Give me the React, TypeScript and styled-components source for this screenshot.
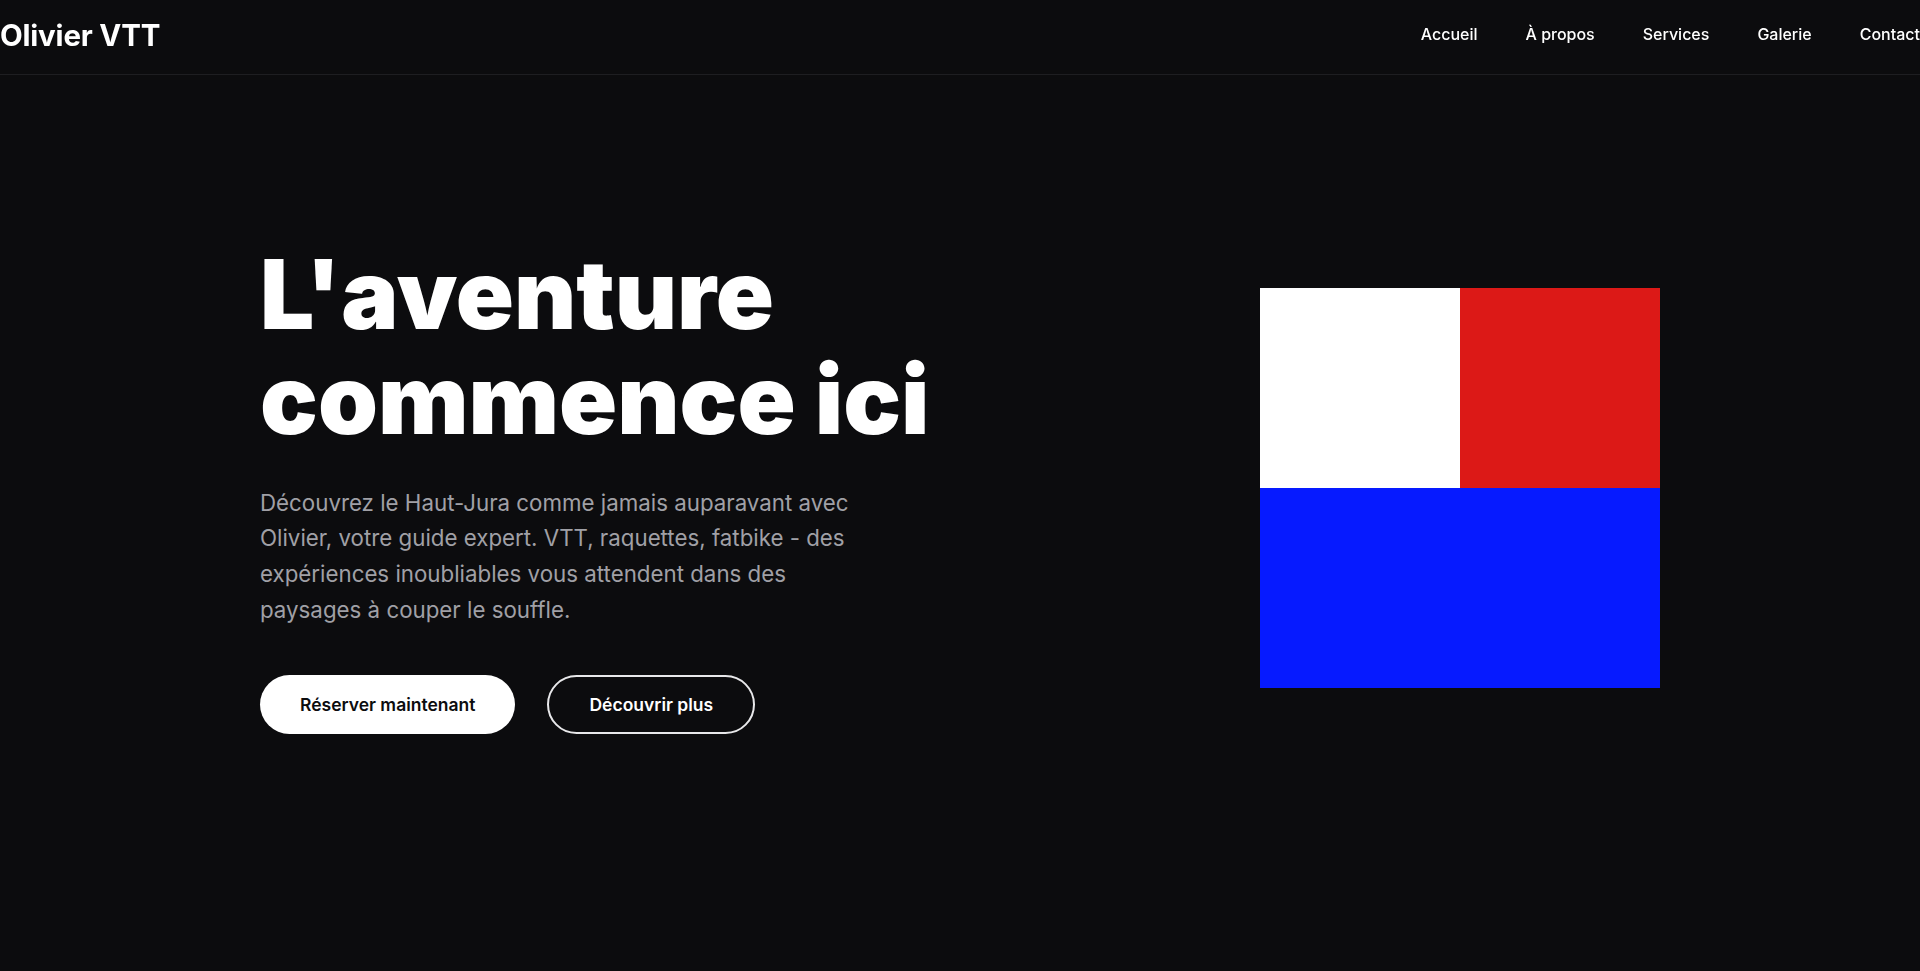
import React from "react";
import styled, { createGlobalStyle } from "styled-components";

const Global = createGlobalStyle`
  html, body {
    margin: 0;
    padding: 0;
    background: #0c0c0e;
    overflow: hidden;
  }
  body {
    font-family: Inter, "Noto Sans", sans-serif;
    color: #ffffff;
  }
  * { box-sizing: border-box; }
`;

const Header = styled.header`
  position: fixed;
  top: 0;
  left: 0;
  right: 0;
  height: 75px;
  display: flex;
  align-items: center;
  justify-content: space-between;
  border-bottom: 1px solid #1e1e21;
  background: #0c0c0e;
  z-index: 10;
`;

const Logo = styled.a`
  font-size: 29.5px;
  font-weight: 700;
  letter-spacing: -0.2px;
  color: #ffffff;
  text-decoration: none;
  margin-top: -5px;
`;

const Nav = styled.nav`
  display: flex;
  gap: 48px;
  margin-right: 0;
  margin-top: -6px;
`;

const NavLink = styled.a`
  font-size: 16px;
  font-weight: 500;
  color: #ffffff;
  text-decoration: none;
`;

const Hero = styled.section`
  min-height: 100vh;
  padding: 5px 260px 0 260px;
  display: grid;
  grid-template-columns: 1fr 1fr;
  align-items: center;
`;

const Content = styled.div`
  display: flex;
  flex-direction: column;
  align-items: flex-start;
`;

const Title = styled.h1`
  margin: 0 0 32px;
  font-size: 96px;
  line-height: 1.1;
  font-weight: 900;
  letter-spacing: 0;
  color: #ffffff;
  white-space: nowrap;
`;

const Lead = styled.p`
  margin: 0 0 48px;
  max-width: 610px;
  font-size: 22.3px;
  line-height: 1.6;
  color: #a0a0a6;
`;

const Actions = styled.div`
  display: flex;
  gap: 32px;
`;

const Button = styled.a<{ $variant: "solid" | "outline" }>`
  display: inline-flex;
  align-items: center;
  justify-content: center;
  height: 59px;
  padding: 0 40px;
  border-radius: 999px;
  font-size: 17.5px;
  font-weight: 600;
  text-decoration: none;
  background: ${(p) => (p.$variant === "solid" ? "#ffffff" : "transparent")};
  color: ${(p) => (p.$variant === "solid" ? "#0c0c0e" : "#ffffff")};
  border: ${(p) => (p.$variant === "solid" ? "none" : "2px solid #e8e8ea")};
`;

const Visual = styled.div`
  justify-self: end;
  display: flex;
  justify-content: flex-end;
`;

const Flag = styled.div`
  width: 400px;
  height: 400px;
  display: grid;
  grid-template-columns: 1fr 1fr;
  grid-template-rows: 1fr 1fr;
`;

const Block = styled.div<{ $color: string; $span?: boolean }>`
  background: ${(p) => p.$color};
  grid-column: ${(p) => (p.$span ? "1 / span 2" : "auto")};
`;

export default function App() {
  return (
    <>
      <Global />
      <Header>
        <Logo href="#">Olivier VTT</Logo>
        <Nav>
          <NavLink href="#">Accueil</NavLink>
          <NavLink href="#">À propos</NavLink>
          <NavLink href="#">Services</NavLink>
          <NavLink href="#">Galerie</NavLink>
          <NavLink href="#">Contact</NavLink>
        </Nav>
      </Header>
      <Hero>
        <Content>
          <Title>
            L'aventure
            <br />
            commence ici
          </Title>
          <Lead>
            Découvrez le Haut-Jura comme jamais auparavant avec Olivier, votre guide expert. VTT,
            raquettes, fatbike - des expériences inoubliables vous attendent dans des paysages à
            couper le souffle.
          </Lead>
          <Actions>
            <Button $variant="solid" href="#">Réserver maintenant</Button>
            <Button $variant="outline" href="#">Découvrir plus</Button>
          </Actions>
        </Content>
        <Visual>
          <Flag>
            <Block $color="#ffffff" />
            <Block $color="#dc1917" />
            <Block $color="#061aff" $span />
          </Flag>
        </Visual>
      </Hero>
    </>
  );
}
